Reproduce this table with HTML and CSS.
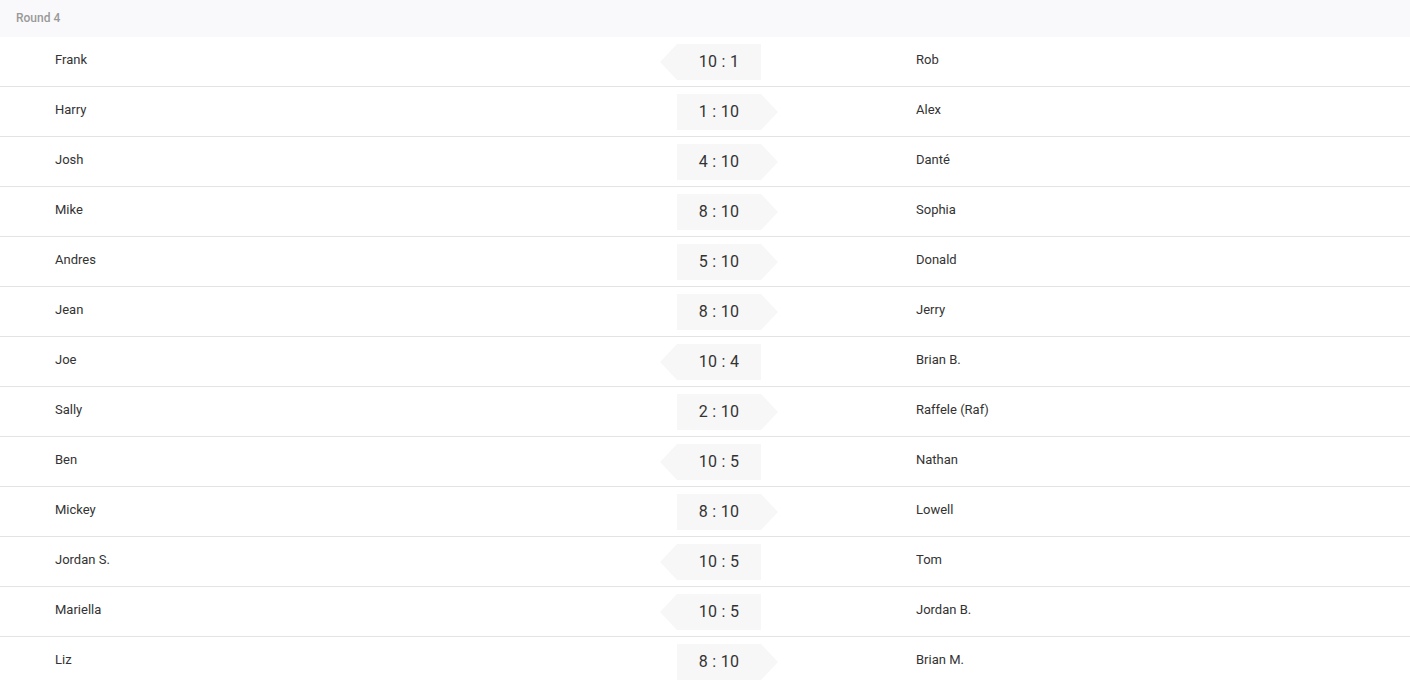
FILE: index.html
```html
<!DOCTYPE html>
<html>
<head>
<meta charset="utf-8">
<link rel="stylesheet" href="styles.css">
</head>
<body>
<div class="round">
  <div class="round-head">Round 4</div>
  <div class="match"><div class="p left">Frank</div><div class="mid"><div class="score win-left">10 : 1</div></div><div class="p right">Rob</div></div>
  <div class="match"><div class="p left">Harry</div><div class="mid"><div class="score win-right">1 : 10</div></div><div class="p right">Alex</div></div>
  <div class="match"><div class="p left">Josh</div><div class="mid"><div class="score win-right">4 : 10</div></div><div class="p right">Danté</div></div>
  <div class="match"><div class="p left">Mike</div><div class="mid"><div class="score win-right">8 : 10</div></div><div class="p right">Sophia</div></div>
  <div class="match"><div class="p left">Andres</div><div class="mid"><div class="score win-right">5 : 10</div></div><div class="p right">Donald</div></div>
  <div class="match"><div class="p left">Jean</div><div class="mid"><div class="score win-right">8 : 10</div></div><div class="p right">Jerry</div></div>
  <div class="match"><div class="p left">Joe</div><div class="mid"><div class="score win-left">10 : 4</div></div><div class="p right">Brian B.</div></div>
  <div class="match"><div class="p left">Sally</div><div class="mid"><div class="score win-right">2 : 10</div></div><div class="p right">Raffele (Raf)</div></div>
  <div class="match"><div class="p left">Ben</div><div class="mid"><div class="score win-left">10 : 5</div></div><div class="p right">Nathan</div></div>
  <div class="match"><div class="p left">Mickey</div><div class="mid"><div class="score win-right">8 : 10</div></div><div class="p right">Lowell</div></div>
  <div class="match"><div class="p left">Jordan S.</div><div class="mid"><div class="score win-left">10 : 5</div></div><div class="p right">Tom</div></div>
  <div class="match"><div class="p left">Mariella</div><div class="mid"><div class="score win-left">10 : 5</div></div><div class="p right">Jordan B.</div></div>
  <div class="match"><div class="p left">Liz</div><div class="mid"><div class="score win-right">8 : 10</div></div><div class="p right">Brian M.</div></div>
</div>
</body>
</html>
```
FILE: styles.css
```css
html, body {
  margin: 0;
  padding: 0;
  background: #ffffff;
  font-family: Roboto, "Liberation Sans", Arial, sans-serif;
  color: #333333;
}
.round-head {
  height: 37px;
  box-sizing: border-box;
  padding: 10px 16px 0;
  background: #f9f9fb;
  color: #999999;
  font-size: 12px;
  font-weight: 500;
  line-height: 16px;
}
.match {
  display: grid;
  grid-template-columns: 660px 118px 1fr;
  height: 50px;
  box-sizing: border-box;
  border-bottom: 1px solid #e3e3e3;
}
.p {
  font-size: 13px;
  line-height: 16px;
  padding-top: 15px;
}
.left { padding-left: 55px; }
.right { padding-left: 138px; }
.mid {
  padding-top: 7px;
}
.score {
  width: 101px;
  height: 36px;
  box-sizing: border-box;
  background: #f7f7f7;
  color: #333333;
  font-size: 16px;
  font-weight: 400;
  line-height: 36px;
  text-align: center;
  letter-spacing: 0.3px;
}
.win-left {
  padding-left: 17px;
  clip-path: polygon(17px 0, 100% 0, 100% 100%, 17px 100%, 0 50%);
}
.win-right {
  margin-left: 17px;
  padding-right: 17px;
  clip-path: polygon(0 0, calc(100% - 17px) 0, 100% 50%, calc(100% - 17px) 100%, 0 100%);
}
```
